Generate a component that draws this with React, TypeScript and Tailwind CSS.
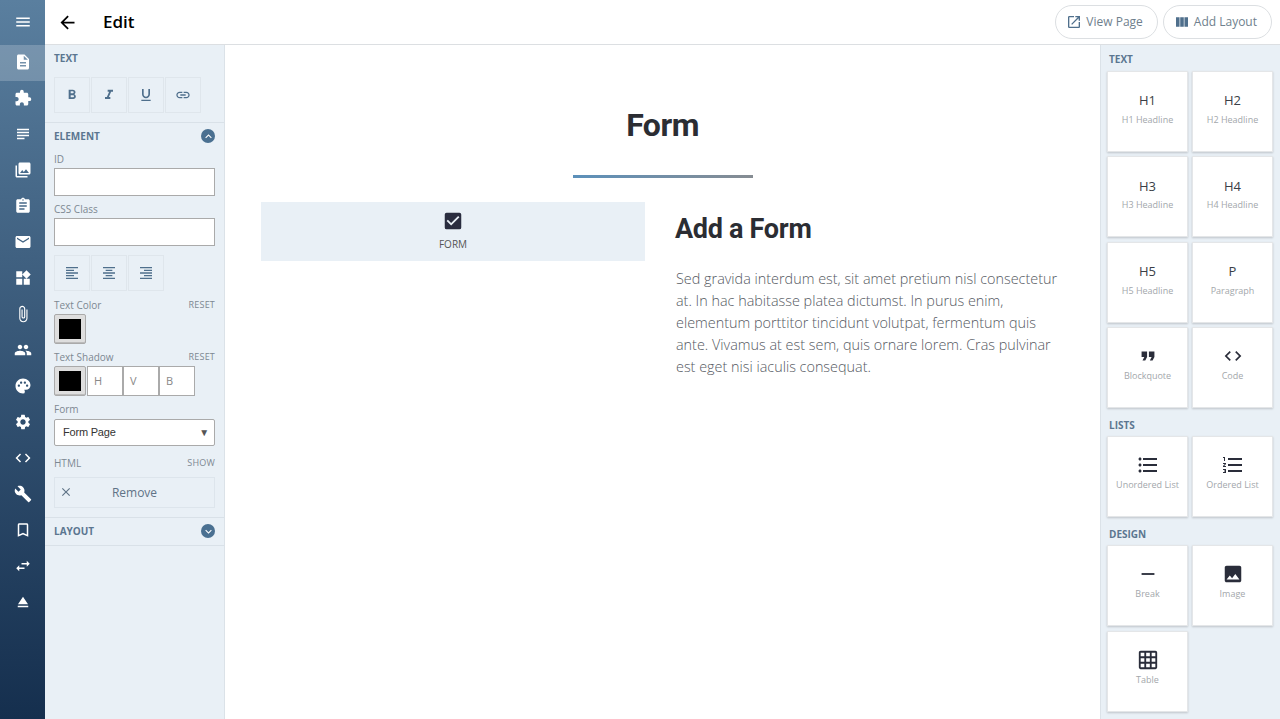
import type { ReactNode } from 'react';
import {
  MdMenu, MdDescription, MdExtension, MdSubject, MdPhotoLibrary, MdAssignment, MdEmail, MdWidgets,
  MdAttachFile, MdPeople, MdPalette, MdSettings, MdCode, MdBuild, MdBookmarkBorder, MdSwapHoriz, MdEject,
  MdArrowBack, MdOpenInNew, MdViewColumn, MdFormatBold, MdFormatItalic, MdFormatUnderlined, MdLink,
  MdFormatAlignLeft, MdFormatAlignCenter, MdFormatAlignRight, MdFormatQuote, MdFormatListBulleted,
  MdFormatListNumbered, MdPhoto, MdRemove, MdGridOn, MdCheckBox, MdClose, MdKeyboardArrowUp, MdKeyboardArrowDown,
} from 'react-icons/md';

const railIcons = [
  MdExtension, MdSubject, MdPhotoLibrary, MdAssignment, MdEmail, MdWidgets, MdAttachFile, MdPeople,
  MdPalette, MdSettings, MdCode, MdBuild, MdBookmarkBorder, MdSwapHoriz, MdEject,
];

function Rail() {
  return (
    <div className="w-[45px] shrink-0 h-[719px] flex flex-col items-center text-white bg-gradient-to-b from-[#5a7f9f] to-[#152f4e]">
      <div className="h-[45px] w-full flex items-center justify-center pb-[1px]"><MdMenu size={18} /></div>
      <div className="h-[36px] w-full flex items-center justify-center bg-white/20 pb-[2px]"><MdDescription size={18} /></div>
      <div className="-mt-px w-full">
        {railIcons.map((Icon, i) => (
          <div key={i} className="h-[36px] w-full flex items-center justify-center"><Icon size={18} /></div>
        ))}
      </div>
    </div>
  );
}

function ToolBtn({ children }: { children: ReactNode }) {
  return (
    <div className="w-[36px] h-[36px] border border-[#dfe6ec] flex items-center justify-center text-[#4f6f8c]">
      {children}
    </div>
  );
}

function Label({ text, right }: { text: string; right?: string }) {
  return (
    <div className="flex justify-between items-center h-[14px] text-[10px] text-[#7d8892]">
      <span>{text}</span>
      {right && <span className="text-[9px] tracking-[0.2px]">{right}</span>}
    </div>
  );
}

function Swatch() {
  return (
    <div className="w-[32px] h-[30px] bg-[#dedede] border border-[#aaa] rounded-[2px] shadow-[inset_0_-1px_0_#bbb] p-[4px] flex">
      <div className="flex-1 bg-black" />
    </div>
  );
}

function SectionHead({ text, icon }: { text: string; icon: ReactNode }) {
  return (
    <div className="flex items-center justify-between h-[14px]">
      <span className="text-[10px] font-bold text-[#5b7690]">{text}</span>
      <span className="w-[14px] h-[14px] rounded-full bg-[#4a7091] text-white flex items-center justify-center">{icon}</span>
    </div>
  );
}

function LeftPanel() {
  return (
    <div className="w-[180px] shrink-0 h-[675px] bg-[#e9f0f6] border-r border-[#dbe2e8] text-[#74808c]">
      <div className="h-[78px] px-[9px] pt-[7px] border-b border-[#d9e1e8]">
        <div className="text-[10px] font-bold text-[#5b7690] leading-[12px]">TEXT</div>
        <div className="flex gap-px mt-[13px]">
          <ToolBtn><MdFormatBold size={16} /></ToolBtn>
          <ToolBtn><MdFormatItalic size={16} /></ToolBtn>
          <ToolBtn><MdFormatUnderlined size={16} /></ToolBtn>
          <ToolBtn><MdLink size={16} /></ToolBtn>
        </div>
      </div>
      <div className="h-[395px] px-[9px] pt-[6px] border-b border-[#d9e1e8]">
        <SectionHead text="ELEMENT" icon={<MdKeyboardArrowUp size={13} />} />
        <div className="mt-[9px]"><Label text="ID" /></div>
        <div className="mt-[2px] h-[28px] bg-white border border-[#aaa]" />
        <div className="mt-[6px]"><Label text="CSS Class" /></div>
        <div className="mt-[2px] h-[28px] bg-white border border-[#aaa]" />
        <div className="flex gap-px mt-[9px]">
          <ToolBtn><MdFormatAlignLeft size={16} /></ToolBtn>
          <ToolBtn><MdFormatAlignCenter size={16} /></ToolBtn>
          <ToolBtn><MdFormatAlignRight size={16} /></ToolBtn>
        </div>
        <div className="mt-[7px]"><Label text="Text Color" right="RESET" /></div>
        <div className="mt-[2px]"><Swatch /></div>
        <div className="mt-[6px]"><Label text="Text Shadow" right="RESET" /></div>
        <div className="mt-[2px] flex">
          <Swatch />
          <div className="flex ml-px">
            {['H', 'V', 'B'].map((c) => (
              <div key={c} className="w-[36px] h-[30px] bg-white border border-[#aaa] pl-[6px] flex items-center text-[11px] text-[#888]">{c}</div>
            ))}
          </div>
        </div>
        <div className="mt-[6px]"><Label text="Form" /></div>
        <div className="mt-[3px] h-[27px] bg-white border border-[#aaa] rounded-[2px] pl-[8px] pr-[5px] flex items-center justify-between text-[11px] tracking-[-0.2px] text-[#333] font-['Liberation_Sans',sans-serif]">
          <span>Form Page</span>
          <span className="text-[10px] text-[#555]">▼</span>
        </div>
        <div className="mt-[10px]"><Label text="HTML" right="SHOW" /></div>
        <div className="mt-[7px] h-[31px] border border-[#dde5ec] relative flex items-center justify-center text-[12px] text-[#5f7386]">
          <MdClose size={14} className="absolute left-[4px] top-[7px]" />
          Remove
        </div>
      </div>
      <div className="h-[28px] px-[9px] pt-[6px] border-b border-[#d9e1e8]">
        <SectionHead text="LAYOUT" icon={<MdKeyboardArrowDown size={13} />} />
      </div>
    </div>
  );
}

function Card({ head, label }: { head: ReactNode; label: string }) {
  return (
    <div className="w-[81px] h-[81px] bg-white border border-[#e4e6e8] shadow-[0_1px_2px_rgba(0,0,0,0.18)] flex flex-col items-center text-center">
      <div className="h-[18px] mt-[19px] flex items-center justify-center text-[13px] text-[#3a3f47]">{head}</div>
      <div className="mt-[4px] text-[9px] leading-[14px] text-[#a3a7ab] whitespace-nowrap">{label}</div>
    </div>
  );
}

function HeadText({ text }: { text: string }) {
  return <span className="pt-[2px]">{text}</span>;
}

function RightPanel() {
  const ic = 'text-[#2a2d3a]';
  const head = 'pl-[2px] h-[28px] pt-[10px] text-[10px] font-bold text-[#5b7690]';
  return (
    <div className="w-[180px] shrink-0 h-[675px] bg-[#e9f0f6] border-l border-[#dbe2e8] px-[6px] overflow-hidden">
      <div className="pl-[2px] pt-[7px] h-[26px] text-[10px] font-bold text-[#5b7690]">TEXT</div>
      <div className="grid grid-cols-[81px_81px] gap-x-[4px] gap-y-[4.33px]">
        <Card head={<HeadText text="H1" />} label="H1 Headline" />
        <Card head={<HeadText text="H2" />} label="H2 Headline" />
        <Card head={<HeadText text="H3" />} label="H3 Headline" />
        <Card head={<HeadText text="H4" />} label="H4 Headline" />
        <Card head={<HeadText text="H5" />} label="H5 Headline" />
        <Card head={<HeadText text="P" />} label="Paragraph" />
        <Card head={<MdFormatQuote size={22} className={ic} />} label="Blockquote" />
        <Card head={<MdCode size={20} className={ic} />} label="Code" />
      </div>
      <div className={head}>LISTS</div>
      <div className="grid grid-cols-[81px_81px] gap-x-[4px]">
        <Card head={<MdFormatListBulleted size={24} className={ic} />} label="Unordered List" />
        <Card head={<MdFormatListNumbered size={24} className={ic} />} label="Ordered List" />
      </div>
      <div className={head}>DESIGN</div>
      <div className="grid grid-cols-[81px_81px] gap-x-[4px] gap-y-[5px]">
        <Card head={<MdRemove size={22} className={ic} />} label="Break" />
        <Card head={<MdPhoto size={22} className={ic} />} label="Image" />
        <Card head={<MdGridOn size={22} className={ic} />} label="Table" />
      </div>
    </div>
  );
}

function PillBtn({ icon, text }: { icon: ReactNode; text: string }) {
  return (
    <div className="h-[34px] pl-[10px] pr-[14px] rounded-full border border-[#dcdfe2] flex items-center gap-[4px] text-[12px] text-[#6f7f8d]">
      <span className="text-[#4f6f8c]">{icon}</span>
      {text}
    </div>
  );
}

export default function App() {
  return (
    <div className="flex w-[1280px] h-[719px] overflow-hidden bg-white font-['Open_Sans',sans-serif]">
      <Rail />
      <div className="flex-1 flex flex-col min-w-0">
        <div className="h-[45px] shrink-0 flex items-center border-b border-[#dcdfe2] pr-[8px]">
          <MdArrowBack size={21} className="ml-[12px] text-black" />
          <span className="ml-[25px] text-[17px] font-semibold text-black">Edit</span>
          <div className="ml-auto flex gap-[5px]">
            <PillBtn icon={<MdOpenInNew size={16} />} text="View Page" />
            <PillBtn icon={<MdViewColumn size={16} />} text="Add Layout" />
          </div>
        </div>
        <div className="flex flex-1 min-h-0">
          <LeftPanel />
          <div className="flex-1 min-w-0 px-[36px] pt-[60px]">
            <h1 className="text-center text-[32px] leading-[40px] font-bold text-[#2b2d33] font-['Roboto',sans-serif] tracking-[-0.5px]">Form</h1>
            <div className="mx-auto mt-[30px] w-[180px] h-[3px] bg-gradient-to-r from-[#5b90ba] to-[#868c92]" />
            <div className="flex mt-[24px]">
              <div className="w-[385px] h-[59px] bg-[#e9f0f6] flex flex-col items-center pt-[8px]">
                <MdCheckBox size={22} className="text-[#2a2d3f]" />
                <span className="mt-[5px] text-[10px] text-[#555]">FORM</span>
              </div>
              <div className="ml-[30px] w-[390px]">
                <h2 className="mt-[7px] text-[27px] leading-[40px] font-bold text-[#2b2d33] font-['Roboto',sans-serif] tracking-[-0.3px]">Add a Form</h2>
                <p className="mt-[19px] pl-[1px] text-[14.4px] leading-[22px] text-[#55595f] font-['Open_Sans',sans-serif] font-light">
                  Sed gravida interdum est, sit amet pretium nisl consectetur at. In hac habitasse platea dictumst. In purus enim, elementum porttitor tincidunt volutpat, fermentum quis ante. Vivamus at est sem, quis ornare lorem. Cras pulvinar est eget nisi iaculis consequat.
                </p>
              </div>
            </div>
          </div>
          <RightPanel />
        </div>
      </div>
    </div>
  );
}
